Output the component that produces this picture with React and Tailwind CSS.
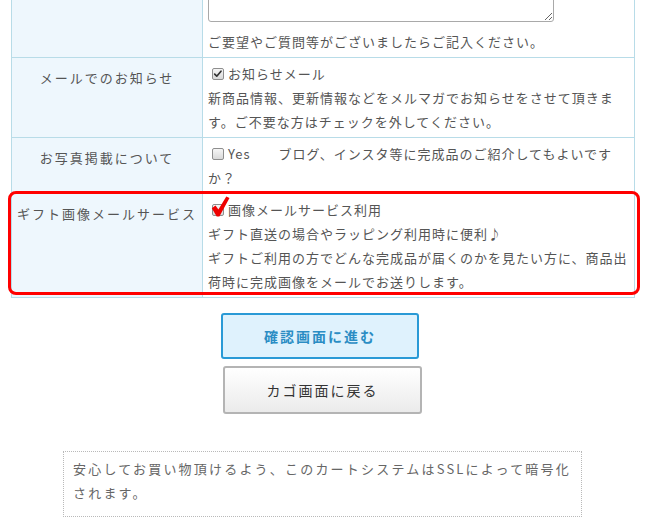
import React from 'react';

// gray native-looking checkbox used in the form rows
const Checkbox = ({ checked = false, children }) => (
    <span className="relative inline-block w-[12px] h-[12px] ml-[4px] mr-[4px] align-[-1px] border border-[#8e8e8e] rounded-[2px] bg-gradient-to-b from-[#f6f6f6] to-[#d9d9d9]">
        {checked && (
            <svg viewBox="0 0 12 12" className="absolute left-[0px] top-[0px] w-[10px] h-[10px]">
                <path d="M2 6.2 L4.5 8.6 L9.6 2.6" fill="none" stroke="#333" strokeWidth="2" strokeLinecap="round" strokeLinejoin="round" />
            </svg>
        )}
        {children}
    </span>
);

const Row = ({ label, children, className = '' }) => (
    <div className={`flex border-b border-[#b8dce8] ${className}`}>
        <div className="w-[191px] shrink-0 border-r border-[#b8dce8] bg-[#eef7fd] pt-[8px] text-center text-[13px] leading-[24px] tracking-[2px] text-[#555]">
            {label}
        </div>
        <div className="flex-1 pl-[5px] pr-[4px] pt-[4px] pb-[3px] text-[13px] leading-[24px] tracking-[1px] text-[#555]">
            {children}
        </div>
    </div>
);

export default function App() {
    return (
        <div className="w-[648px] h-[530px] overflow-hidden bg-white font-['Noto_Sans_CJK_JP','Noto_Sans',sans-serif]">
            <div className="ml-[11px] w-[624px] -mt-[42px] border-x border-[#b8dce8]">
                <Row label="">
                    <textarea className="block w-[346px] h-[60px] mb-[8px] border border-[#a9a9a9] rounded-[3px] bg-white" />
                    <p>ご要望やご質問等がございましたらご記入ください。</p>
                </Row>
                <Row label="メールでのお知らせ">
                    <p>
                        <Checkbox checked />
                        お知らせメール
                    </p>
                    <p>新商品情報、更新情報などをメルマガでお知らせをさせて頂きます。ご不要な方はチェックを外してください。</p>
                </Row>
                <Row label="お写真掲載について">
                    <p>
                        <Checkbox />
                        Yes　　ブログ、インスタ等に完成品のご紹介してもよいですか？
                    </p>
                </Row>
                <Row label="ギフト画像メールサービス" className="relative">
                    <p>
                        <Checkbox>
                            <svg viewBox="0 0 18 21" className="absolute -left-[2px] -top-[9px] w-[19px] h-[21px]">
                                <path d="M0.3 12.2 L4 9.6 L6.9 13.6 L14.8 0.4 L18 2 L7.9 20.4 L5.2 20.4 Z" fill="#ee0000" />
                            </svg>
                        </Checkbox>
                        画像メールサービス利用
                    </p>
                    <p>ギフト直送の場合やラッピング利用時に便利♪</p>
                    <p>ギフトご利用の方でどんな完成品が届くのかを見たい方に、商品出荷時に完成画像をメールでお送りします。</p>
                    <div className="pointer-events-none absolute -left-[4px] -right-[6px] -top-[3px] bottom-[2px] rounded-[8px] border-[3px] border-[#ff0000]" />
                </Row>
            </div>

            <div className="flex flex-col items-start mt-[15px]">
                <button className="ml-[221px] w-[198px] h-[46px] rounded-[3px] border-2 border-[#2a9ad6] bg-[#dff2fd] text-[14px] font-bold tracking-[2px] text-[#2b8dc4]">
                    確認画面に進む
                </button>
                <button className="ml-[223px] mt-[7px] w-[199px] h-[48px] rounded-[3px] border-2 border-[#b4b4b4] bg-gradient-to-b from-white to-[#ebebeb] text-[14px] font-normal tracking-[2px] text-[#333]">
                    カゴ画面に戻る
                </button>
            </div>

            <div className="ml-[63px] mt-[37px] w-[519px] border border-dotted border-[#b9b9b9] pl-[9px] pr-[9px] pt-[5px] pb-[11px] text-[13px] leading-[24px] tracking-[2.2px] text-[#666]">
                安心してお買い物頂けるよう、このカートシステムはSSLによって暗号化されます。
            </div>
        </div>
    );
}
